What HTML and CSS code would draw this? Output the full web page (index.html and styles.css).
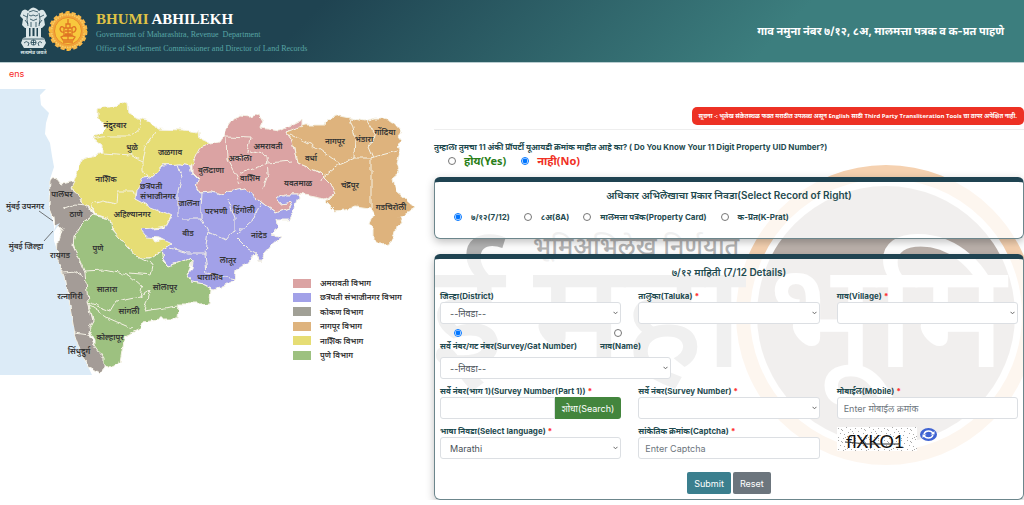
FILE: index.html
```html
<!DOCTYPE html>
<html lang="mr">
<head>
<meta charset="utf-8">
<meta name="viewport" content="width=device-width, initial-scale=1">
<title>Bhumi Abhilekh</title>
<link rel="stylesheet" href="styles.css">
</head>
<body>
<header class="site-header">
  <div class="brand">
    <svg class="emblem" viewBox="0 0 27 48" aria-hidden="true">
      <g fill="#dbe6e8">
        <path d="M10 2 Q13 -1 17 2 L19 4 Q23 1 25 5 L27 9 24 12 25 18 22 21 5 21 2 18 3 12 0 9 2 4 Q5 1 8 4Z"/>
        <path d="M6 21h3v9H6zM10.500 21h2v9h-2zM14.500 21h2v9h-2zM18 21h3v9h-3z"/>
        <path d="M3 31 Q13 27 24 31 L26 36 23 41H4L1 36Z"/>
      </g>
      <g fill="none" stroke="#1f4453" stroke-width=".8">
        <path d="M9 5q4-3 9 0M9 8q2 2 4 0 3 2 5 0M10 12q3 3 7 0M3 8l4 2M24 8l-4 2M8 6q-2 6 0 13M19 6q2 6 0 13M11 15v5M16 15v5M5 13l3 4M22 13l-3 4"/>
        <circle cx="13.500" cy="35.500" r="2.600"/><path d="M13.500 33v5M11 35.500h5M4 36q2-3 5 0l-1 3M22 36q-2-3-4 0l1 3M3 32l21 0"/>
      </g>
      <text x="13.500" y="46.500" text-anchor="middle" class="emblem-motto">सत्यमेव जयते</text>
    </svg>
    <svg class="seal" viewBox="0 0 40 42" aria-hidden="true">
      <circle cx="20" cy="21" r="18" fill="#f1a53b" stroke="#f7b94c" stroke-width="3" stroke-dasharray="4 2.280"/>
      <circle cx="20" cy="21" r="16.300" fill="none" stroke="#f8d066" stroke-width="1.500" stroke-dasharray="1.500 1"/>
      <circle cx="20" cy="21" r="13.500" fill="#f8c83d" stroke="#e98b2d"/>
      <path d="M20 9v5M18 14h4v4h-4zM16 18q-3-3-4 1 1 4 4 3v4M24 18q3-3 4 1-1 4-4 3v4M16 18h8v8h-8zM13 27q7-4 14 0l-2 3H15zM15 32h10M20 18v12M17 21h6M17 24h6" fill="none" stroke="#df7424" stroke-width="1.300"/>
      <path d="M20 1v3M20 38v3M1 21h3M36 21h3" stroke="#f8b83c" stroke-width="3"/>
    </svg>
    <div class="brand-text">
      <h1 class="brand-name"><span class="gold">BHUMI</span> ABHILEKH</h1>
      <p class="brand-line">Government of Maharashtra, Revenue&nbsp; Department</p>
      <p class="brand-line">Office of Settlement Commissioner and Director of Land Records</p>
    </div>
  </div>
  <h2 class="page-title">गाव नमुना नंबर ७/१२, ८अ, मालमत्ता पत्रक व क-प्रत पाहणे</h2>
</header>
<p class="ens">ens</p>
<main class="columns">
  <section class="map-column">
    <svg class="map" viewBox="0 88 434 287" role="img" aria-label="महाराष्ट्र विभाग नकाशा">
      <defs>
        <filter id="coast" x="-5%" y="-5%" width="110%" height="110%">
          <feTurbulence type="fractalNoise" baseFrequency=".12" numOctaves="2" seed="4" result="n"/>
          <feDisplacementMap in="SourceGraphic" in2="n" scale="6" xChannelSelector="R" yChannelSelector="G"/>
        </filter>
      </defs>
      <path fill="#dcebf7" d="M0 88H46L40 94 41 104 49 112 46 122 45 133 50 142 52 155 54 166 50 178 49 205 54 225 54 240 61 260 70 300 76 335 83 355 92 374H0Z"/>
      <g filter="url(#coast)" stroke="#f4f1e4" stroke-width="1" stroke-linejoin="round">
        <path fill="#e6dd74" d="M98 108 102 106 116 104 121 101 127 103 128 112 138 117 146 119 152 122 157 128 182 129 199 131 200 138 211 143 202 147 197 154 194 162 190 165 180 163 163 164 158 170 151 176 142 177 140 185 135 198 147 202 160 208 171 213 166 225 146 228 155 241 165 239 172 242 160 252 150 257 138 257 128 246 117 234 111 225 110 218 95 213 88 205 80 200 71 184 77 174 81 159 92 155 102 151 102 145 92 137 100 133 107 126 98 118Z"/>
        <path fill="#dba3a3" d="M200 147 211 143 220 141 224 135 228 125 233 118 240 115 250 116 259 113 263 120 260 127 280 130 302 119 302 128 286 131 292 140 297 162 320 172 333 185 335 193 325 198 310 195 298 193 285 193 277 198 280 203 293 201 290 207 276 212 258 199 245 187 224 194 212 191 200 192 196 185 198 178 192 172 192 163 197 152Z"/>
        <path fill="#deb37d" d="M286 131 305 124 325 124 327 118 340 115 351 117 365 120 375 117 382 117 395 122 402 130 398 135 402 140 396 145 400 150 397 162 400 172 393 178 396 190 404 197 415 207 405 213 400 215 402 222 396 226 395 232 390 242 380 243 373 238 373 228 370 223 374 213 370 208 355 206 345 209 335 210 325 200 335 193 330 182 320 172 297 162 292 140Z"/>
        <path fill="#a2a1e8" d="M142 177 151 176 158 170 163 164 180 163 190 165 192 173 198 179 196 186 200 192 212 191 224 194 228 190 245 187 258 199 276 212 290 207 293 201 280 203 277 198 285 193 298 193 299 197 295 208 290 218 276 218 278 227 271 233 281 236 272 243 264 252 260 261 256 252 246 264 236 268 235 278 225 284 214 287 205 283 191 281 187 274 192 268 193 260 190 257 178 262 168 265 163 258 161 250 172 243 160 237 147 236 141 229 150 228 165 227 171 215 165 212 150 206 135 198 136 190Z"/>
        <path fill="#9dc180" d="M92 214 110 218 112 228 128 246 138 257 150 257 161 250 163 260 168 265 178 262 190 257 193 260 187 274 191 281 205 283 211 287 210 302 200 303 178 303 177 318 160 318 142 320 140 328 125 335 122 350 120 362 110 367 104 364 95 350 95 340 88 328 93 320 88 300 83 275 80 265 73 242 76 228Z"/>
        <path fill="#a49c97" d="M50 179 58 178 62 183 75 180 72 186 80 200 88 205 92 214 82 222 74 236 73 245 80 260 85 272 88 300 93 320 88 330 95 345 104 358 104 366 99 372 90 366 82 355 75 335 70 305 65 275 57 258 58 240 62 226 54 225 53 215 49 205Z"/>
        <path fill="none" d="M92 138 108 135 130 135 140 127 138 117M102 152 130 154 143 160 146 145 155 132M143 160 143 170 148 178M93 213 92 203 103 200 117 203 118 190 133 190 135 197M178 164 182 176 178 191 178 216M202 192 201 207 201 218 182 218M201 217 208 230 226 239 235 228 235 217 228 198M208 230 205 252 207 272 235 278M236 236 248 248 256 252M237 232 255 216 261 200M171 247 188 252 208 252M226 135 227 158 240 182M227 158 246 156 250 137 226 136M250 150 267 154 268 174 262 190M240 173 268 162 292 160M290 133 320 148 340 163 322 177 321 181M350 117 355 136 354 157 340 163M354 157 370 157 397 150M367 120 376 135 368 145 373 157M371 157 371 210M84 270 105 269 128 274 142 286 140 295 116 300 110 310 88 302M130 272 151 274 153 264 140 257M140 295 150 288 144 310 178 305M90 305 108 317 133 328M62 208 75 203 88 204M64 272 74 271 83 276M75 332 89 334"/>
      </g>
      <path d="M39 210 53 220M44 240 53 230" stroke="#555" stroke-width=".8"/>
      <path d="M60 222l-7 10 3-8z" fill="#dcebf7"/>
      <g class="map-labels">
        <text x="115" y="127">नंदुरबार</text><text x="132" y="149">धुळे</text><text x="170" y="154">जळगाव</text><text x="106" y="181">नाशिक</text><text x="132" y="216">अहिल्यानगर</text>
        <text x="151" y="188">छत्रपती</text><text x="158" y="198">संभाजीनगर</text><text x="189" y="205">जालना</text><text x="216" y="213">परभणी</text><text x="244" y="212">हिंगोली</text><text x="188" y="235">बीड</text><text x="259" y="237">नांदेड</text><text x="228" y="262">लातूर</text><text x="210" y="279">धाराशिव</text>
        <text x="268" y="148">अमरावती</text><text x="240" y="160">अकोला</text><text x="211" y="172">बुलढाणा</text><text x="250" y="180">वाशिम</text><text x="298" y="185">यवतमाळ</text>
        <text x="335" y="143">नागपूर</text><text x="364" y="141">भंडारा</text><text x="385" y="134">गोंदिया</text><text x="311" y="160">वर्धा</text><text x="350" y="187">चंद्रपूर</text><text x="391" y="209">गडचिरोली</text>
        <text x="62" y="196">पालघर</text><text x="76" y="216">ठाणे</text><text x="25" y="208">मुंबई उपनगर</text><text x="26" y="248">मुंबई जिल्हा</text><text x="60" y="257">रायगड</text><text x="70" y="298">रत्नागिरी</text><text x="79" y="353">सिंधुदुर्ग</text>
        <text x="98" y="250">पुणे</text><text x="107" y="291">सातारा</text><text x="165" y="289">सोलापूर</text><text x="129" y="313">सांगली</text><text x="110" y="339">कोल्हापूर</text>
      </g>
      <g>
        <path fill="#dba3a3" d="M293 278h18v9h-18z"/><path fill="#a2a1e8" d="M293 292h18v9h-18z"/><path fill="#a1a096" d="M293 306h18v9h-18z"/><path fill="#deb37d" d="M293 321h18v9h-18z"/><path fill="#e6dd74" d="M293 335h18v9h-18z"/><path fill="#9dc180" d="M293 350h18v9h-18z"/>
      </g>
      <g class="map-legend">
        <text x="320" y="285">अमरावती विभाग</text><text x="320" y="299">छत्रपती संभाजीनगर विभाग</text><text x="320" y="314">कोकण विभाग</text><text x="320" y="328">नागपूर विभाग</text><text x="320" y="343">नाशिक विभाग</text><text x="320" y="357">पुणे विभाग</text>
      </g>
    </svg>
  </section>

  <section class="form-column">
    <svg class="watermark" viewBox="434 88 590 417" preserveAspectRatio="xMinYMin slice" aria-hidden="true">
      <circle cx="886" cy="314" r="143" fill="#fff" stroke="#f5d1b0" stroke-width="14"/>
      <circle cx="886" cy="314" r="129" fill="#bbb1ab"/>
      <text x="533" y="254" class="wm-small">भूमिअभिलेख निर्णयात</text>
      <text x="430" y="366" class="wm-big">ई</text>
      <text x="533" y="366" class="wm-big">महा</text>
      <text x="768" y="366" class="wm-big wm-white">भूमि</text>
    </svg>
    <p class="notice">सूचना -: भूलेख संकेतस्थळ फक्त मराठीत उपलब्ध असून English साठी Third Party Transliteration Tools चा वापर अपेक्षित नाही.</p>
    <hr class="rule">
    <fieldset class="plain uid">
      <legend class="question">तुम्हाला तुमचा 11 अंकी प्रॉपर्टी यूआयडी क्रमांक माहीत आहे का? ( Do You Know Your 11 Digit Property UID Number?)</legend>
      <div class="uid-options">
        <label class="choice yes"><input type="radio" name="uid"> होय(Yes)</label>
        <label class="choice no"><input type="radio" name="uid" checked> नाही(No)</label>
      </div>
    </fieldset>

    <div class="card record-card">
      <h3 class="card-title">अधिकार अभिलेखाचा प्रकार निवडा(Select Record of Right)</h3>
      <div class="record-options">
        <label class="choice"><input type="radio" name="record" checked> ७/१२(7/12)</label>
        <label class="choice"><input type="radio" name="record"> ८अ(8A)</label>
        <label class="choice"><input type="radio" name="record"> मालमत्ता पत्रक(Property Card)</label>
        <label class="choice"><input type="radio" name="record"> क-प्रत(K-Prat)</label>
      </div>
    </div>

    <form class="card details-card">
      <h3 class="card-title">७/१२ माहिती (7/12 Details)</h3>
      <div class="grid">
        <div class="field"><label for="district">जिल्हा(District)</label><select id="district"><option>--निवडा--</option></select></div>
        <div class="field"><label for="taluka">तालुका(Taluka) <b class="req">*</b></label><select id="taluka"><option></option></select></div>
        <div class="field"><label for="village">गाव(Village) <b class="req">*</b></label><select id="village"><option></option></select></div>
      </div>
      <div class="search-by">
        <label class="stacked"><input type="radio" name="by" checked>सर्वे नंबर/गट नंबर(Survey/Gat Number)</label>
        <label class="stacked"><input type="radio" name="by">नाव(Name)</label>
      </div>
      <select class="by-type" aria-label="शोध प्रकार"><option>--निवडा--</option></select>
      <div class="grid lower">
        <div class="field"><label for="part">सर्वे नंबर(भाग 1)(Survey Number(Part 1)) <b class="req">*</b></label><div class="input-group"><input type="text" id="part"><button type="button" class="btn search">शोधा(Search)</button></div></div>
        <div class="field"><label for="survey">सर्वे नंबर(Survey Number) <b class="req">*</b></label><select id="survey"><option></option></select></div>
        <div class="field"><label for="mobile">मोबाईल(Mobile) <b class="req">*</b></label><input type="text" id="mobile" placeholder="Enter मोबाईल क्रमांक"></div>
        <div class="field"><label for="lang">भाषा निवडा(Select language) <b class="req">*</b></label><select id="lang"><option>Marathi</option></select></div>
        <div class="field"><label for="captcha">सांकेतिक क्रमांक(Captcha) <b class="req">*</b></label><input type="text" id="captcha" placeholder="Enter Captcha"></div>
        <div class="captcha-box">
          <svg class="captcha" viewBox="0 0 80 24" role="img" aria-label="flXKO1">
            <defs><pattern id="dots" width="23" height="12" patternUnits="userSpaceOnUse"><path fill="#aaa" d="M1 1h1v1h-1zM5 3h1v1h-1zM9 0h1v1h-1zM13 2h1v1h-1zM18 1h1v1h-1zM21 4h1v1h-1zM3 6h1v1h-1zM7 7h1v1h-1zM11 5h1v1h-1zM16 6h1v1h-1zM20 8h1v1h-1zM1 10h1v1h-1zM6 11h1v1h-1zM10 9h1v1h-1zM14 10h1v1h-1zM18 11h1v1h-1zM4 2h1v1h-1zM15 4h1v1h-1zM8 10h1v1h-1z"/></pattern></defs>
            <path fill="#fff" d="M0 0h80v24H0z"/><path fill="url(#dots)" d="M0 0h80v24H0z"/>
            <text x="9" y="21" class="captcha-text">flXKO1</text>
            <path d="M8 15 30 17 63 17" stroke="#333" fill="none"/>
          </svg>
          <button type="button" class="refresh" aria-label="Refresh captcha">
            <svg viewBox="0 0 17 13"><ellipse cx="8.500" cy="6.500" rx="8.500" ry="6.500" fill="#3f63d2"/><path d="M4 6Q5 3 8.500 3T13 5.500M13 7Q12 10 8.500 10T4 7.500" fill="none" stroke="#fff" stroke-width="1.400"/><path d="M10.500 6.500h4V3zM6.500 6.500h-4V10z" fill="#fff"/></svg>
          </button>
        </div>
      </div>
      <div class="actions"><button type="submit" class="btn submit">Submit</button><button type="reset" class="btn reset">Reset</button></div>
    </form>
  </section>
</main>
</body>
</html>
```
FILE: styles.css
```css
* { box-sizing: border-box; }
body {
  margin: 0;
  background: #fff;
  color: #1f4b50;
  font: 8px/12px Inter, "Noto Sans", "Noto Sans Devanagari", sans-serif;
  overflow-x: hidden;
}
h1, h2, h3, p { margin: 0; }
input, select, button { font-family: inherit; }

.site-header {
  display: flex;
  align-items: center;
  justify-content: space-between;
  height: 63px;
  padding: 0 20px;
  background: linear-gradient(135deg, #1f4351 30%, #3c7e7e 75%);
  border-bottom: 1px solid #b9cdd0;
}
.brand { display: flex; align-items: center; }
.emblem { width: 27px; height: 48px; }
.emblem-motto { font-size: 5px; font-weight: 700; fill: #dbe6e8; }
.seal { width: 40px; height: 42px; margin: 0 8px 0 1px; }
.brand-text { padding-top: 3px; }
.brand-name { font: 700 15px/18px "Liberation Serif", serif; color: #fff; }
.gold { color: #dfc246; }
.brand-line { font: 8px/14px "Liberation Serif", serif; color: #58a5a5; }
.page-title { font-size: 11px; line-height: 18px; font-weight: 700; color: #fff; }

.ens { padding: 4px 9px 8px; font-size: 9px; line-height: 14px; color: #f8281e; }

.columns { display: grid; grid-template-columns: 434fr 590fr; align-items: start; }
.map { display: block; width: 100%; }
.map-labels, .map-legend { font-size: 8px; font-weight: 600; fill: #333; }
.map-labels { text-anchor: middle; }

.form-column {
  position: relative;
  display: flex;
  flex-direction: column;
  padding-top: 18px;
  isolation: isolate;
}
.watermark { position: absolute; inset: 0; z-index: -1; width: 100%; height: 417px; }
.wm-small { font-size: 25px; font-weight: 500; fill: #b4b4b4; }
.wm-big { font-size: 148px; font-weight: 500; fill: #b4b4b4; }
.wm-white { fill: #fff; }

.notice {
  align-self: flex-end;
  padding: 3px 7px;
  border-radius: 5px;
  background: #ed3124;
  color: #fff;
  font: 700 6px/12px "Open Sans", "Noto Sans Devanagari", sans-serif;
}
.rule { width: 100%; margin: 4px 0 11px; border: 0; border-top: 1px solid #eee; }
.plain { margin: 0; padding: 0; border: 0; min-width: 0; }
.question { padding: 0; font-weight: 700; }
.uid-options { display: flex; gap: 15px; padding-left: 14px; }
.choice { display: flex; align-items: center; font-weight: 700; }
input[type="radio"] { width: 8px; height: 8px; margin: 0; flex: none; }
.uid-options .choice { gap: 8px; font: 700 11px/16px "Noto Sans", "Noto Sans Devanagari", sans-serif; }
.yes { color: #2b8019; }
.no { color: #f03024; }

.card {
  border: 1px solid #6c868c;
  border-top: 5px solid #1f4351;
  border-radius: 6px;
  background: rgba(255, 255, 255, .8);
  box-shadow: 0 3px 8px rgba(0, 0, 0, .25);
}
.card-title { font-size: 10px; line-height: 16px; font-weight: 600; text-align: center; }
.record-card { margin-top: 8px; padding: 5px 19px 15px; }
.record-options { display: flex; gap: 14px; margin-top: 8px; }
.record-options .choice { gap: 9px; }
.details-card { margin-top: 15px; padding: 5px; }
.grid { display: grid; grid-template-columns: repeat(3, minmax(0, 1fr)); gap: 6px 17px; margin-top: 10px; }
.field { display: flex; flex-direction: column; }
.field > label, .stacked { font-size: 8px; line-height: 12px; font-weight: 700; white-space: nowrap; }
.req { color: #f33; }
select, input[type="text"] {
  width: 100%;
  height: 22px;
  padding: 0 6px;
  border: 1px solid #dcdfe3;
  border-radius: 3px;
  background: #fff;
  color: #495057;
  font-size: 9px;
}
select {
  appearance: none;
  background: #fff url("data:image/svg+xml,%3Csvg xmlns='http://www.w3.org/2000/svg' width='5' height='4'%3E%3Cpath d='M.5.8l2 2 2-2' fill='none' stroke='%23666'/%3E%3C/svg%3E") no-repeat right 2px center;
  padding-left: 9px;
}
input::placeholder { color: #6c757d; opacity: 1; }
.search-by { display: flex; gap: 23px; margin-top: 5px; }
.stacked { display: flex; flex-direction: column; gap: 3px; }
.stacked input { margin-left: 14px; }
.by-type { display: block; width: 40%; margin-top: 5px; }
.lower { margin-top: 6px; }
.input-group { display: flex; }
.input-group input { flex: 1; min-width: 0; border-radius: 3px 0 0 3px; }
.btn { height: 22px; padding: 0 7px; border: 0; border-radius: 2px; color: #fff; font-size: 9px; white-space: nowrap; }
.search { background: #43853d; border-radius: 0 3px 3px 0; }
.captcha-box { display: flex; align-items: flex-start; gap: 3px; padding-top: 2px; }
.captcha { width: 80px; height: 24px; }
.captcha-text { font: 18px Lato, sans-serif; fill: #111; }
.refresh { width: 17px; height: 13px; margin-top: 1px; padding: 0; border: 0; background: none; }
.refresh svg { display: block; width: 17px; height: 13px; }
.actions { display: flex; justify-content: center; gap: 2px; margin-top: 13px; }
.submit { background: #3b7f8e; }
.reset { background: #6c757d; }
```
